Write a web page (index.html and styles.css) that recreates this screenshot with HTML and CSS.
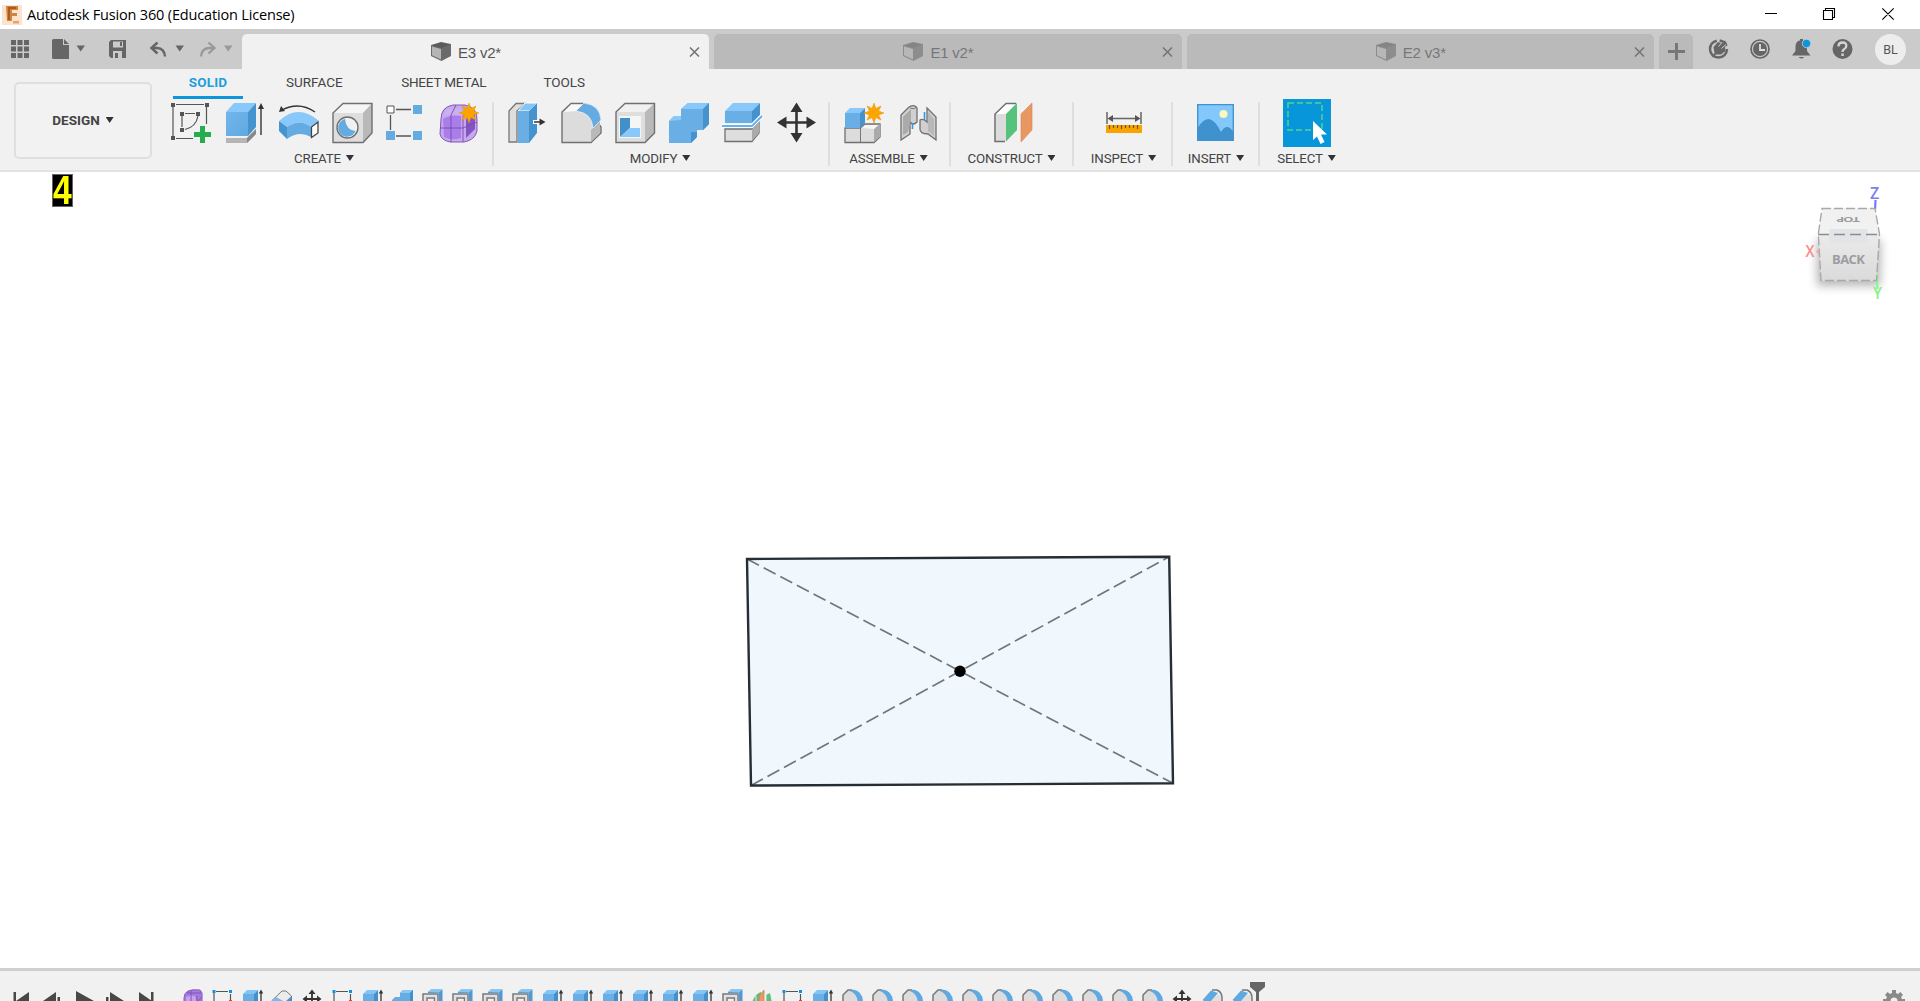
FILE: index.html
```html
<!DOCTYPE html>
<html lang="en">
<head>
<meta charset="utf-8">
<title>Autodesk Fusion 360</title>
<link rel="stylesheet" href="styles.css">
</head>
<body>
<svg class="defs" width="0" height="0">
  <defs>
    <linearGradient id="gBlue" x1="0" y1="0" x2="1" y2="1"><stop offset="0" stop-color="#72b6eb"/><stop offset="1" stop-color="#5fa9e0"/></linearGradient>
    <linearGradient id="gFace" x1="0" y1="0" x2="0" y2="1"><stop offset="0" stop-color="#ebebeb"/><stop offset="1" stop-color="#dadada"/></linearGradient>
    <filter id="soft" x="-30%" y="-30%" width="160%" height="160%"><feGaussianBlur stdDeviation="5"/></filter>
    <path id="star" d="M0-10 1.9-4.6 7-7 4.6-1.9 10 0 4.6 1.9 7 7 1.9 4.6 0 10-1.9 4.6-7 7-4.6 1.9-10 0-4.6-1.9-7-7-1.9-4.6Z" fill="#fca400" stroke="#e79500" stroke-width=".5"/>
    <g id="cube">
      <path d="M0 3 10 0 20 2V14L10.500 19 0 14Z" fill="#6a6a6a"/>
      <path d="M1 4.500 10 7V17.500L1 13.300Z" fill="#b4b6b6"/>
      <path d="M1 3.500 10 .5 19 2.500 10.500 6Z" fill="#5a5a5a"/>
    </g>
    <symbol id="t-form" viewBox="0 0 30 20"><path d="M6 11Q6 6 10 4Q14 2 22 3Q25 5 24 10V20H6Z" fill="#a67bdc" stroke="#8a5bc4"/><path d="M8 10Q14 7 18 10V20H8Z" fill="#c3a2ee"/><path d="M13 3V20M7 15H19L24 10M19 9V20M9 6H23" stroke="#8252bd" fill="none"/></symbol>
    <symbol id="t-sketch" viewBox="0 0 30 20"><path d="M6 5V20M8 4.500H20M22.500 7V14" stroke="#555" fill="none" stroke-width="1.200"/><path d="M4.500 3h3v3h-3zM21 3h3v3h-3z" fill="#148fe6"/><path d="M21 13h3v3h-3z" fill="#f33"/></symbol>
    <symbol id="t-ext" viewBox="0 0 30 20"><path d="M5 7 9 3H20L16 7Z" fill="#83c5f7"/><path d="M5 7H16V20H5Z" fill="#69afe5"/><path d="M16 7 20 3V20H16Z" fill="#4490c9"/><path d="M23 5V20" stroke="#333" stroke-width="1.300"/><path d="M20.800 6.500 23 2.500 25.200 6.500Z" fill="#333"/></symbol>
    <symbol id="t-erase" viewBox="0 0 30 20"><path d="M4 13.500 14 4H18L23.500 9V14L18 20H8L4 16Z" fill="#ececec" stroke="#777"/><path d="M4 13.500 8 10 17 15V20H8L4 16Z" fill="#79baec"/><path d="M17 15 23.500 9V14L18 20H17Z" fill="#4b94ce"/></symbol>
    <symbol id="t-move" viewBox="0 0 30 20"><path d="M14 5V20M8 12H20" stroke="#333" stroke-width="1.800"/><path d="M10.500 7 14 2.500 17.500 7ZM9 8.500V15.500L4.500 12ZM19 8.500V15.500L23.500 12Z" fill="#333"/></symbol>
    <symbol id="t-join" viewBox="0 0 30 20"><path d="M4 13 7 10H12V6L15 3H25V16L21 20H4Z" fill="#66ade4"/><path d="M12 6 15 3H25L22 6Z" fill="#88c8f8"/><path d="M22 6 25 3V16L22 20Z" fill="#4490c9"/></symbol>
    <symbol id="t-shell" viewBox="0 0 30 20"><path d="M10 5 13 2.500H24.500V18L21 20V6H10Z" fill="#4f9ad4"/><path d="M10 5 13 2.500H24.500L21 5.500Z" fill="#85c5f5"/><path d="M5 20V7H20V20" stroke="#777" stroke-width="1.500" fill="none"/><path d="M9 20V11H16.500V20" stroke="#777" stroke-width="1.500" fill="none"/><path d="M7 20V9H18V20" stroke="#ddd" stroke-width="1.500" fill="none"/></symbol>
    <symbol id="t-plane" viewBox="0 0 30 20"><path d="M3 20Q5 8 13 5V20ZM18 8 22 6 24 16V20H18Z" fill="#62bd80"/><path d="M11 9 16 3V20H11Z" fill="#e49a66" stroke="#c77745" stroke-width=".6"/><path d="M8 9V20M18 6V20" stroke="#e6e6e6"/></symbol>
    <symbol id="t-fillet" viewBox="0 0 30 20"><path d="M5 20V8L10 3H14L25 14V20Z" fill="#dcdcdc"/><path d="M5 20V8L10 3H14" stroke="#777" stroke-width="1.500" fill="none"/><path d="M12 4 15 2.500Q24 4 25 14L20 18Q20 7 12 4Z" fill="#5ea9e0"/></symbol>
    <symbol id="t-chamfer" viewBox="0 0 30 20"><path d="M8 20 19 8H23V20Z" fill="#e0e0e0"/><path d="M14 3H19Q24 5 24 11V15L20 19" fill="none" stroke="#777" stroke-width="1.500"/><path d="M4.500 13 13 3.500 20 6 10.500 17Z" fill="#5ea9e0"/></symbol>
  </defs>
</svg>

<header class="titlebar">
  <svg width="20" height="20" viewBox="2 4 20 20"><path d="M2 4H22V24H2Z" fill="#fce3cf"/><path d="M6 5H18V9H12V12H17V15H12V20H7Z" fill="#d2843f"/><path d="M8 6H16V8H10V19H8Z" fill="#a95c1e"/><path d="M13 20H19V22.500H13Z" fill="#eca263"/></svg>
  <h1 class="title">Autodesk Fusion 360 (Education License)</h1>
  <svg class="winctl" width="140" height="29" viewBox="1760 0 140 29" fill="none" stroke="#000" stroke-width="1.100"><path d="M1765 13.500H1777M1823.500 10.500H1832.500V19.500H1823.500ZM1825.500 10.500V8.500H1834.500V17.500H1832.500M1882.300 8.300 1893.700 19.700M1893.700 8.300 1882.300 19.700"/></svg>
</header>

<div class="tabbar">
  <svg class="quick" width="242" height="40" viewBox="0 29 242 40">
    <g fill="#666"><path d="M11 40h5v5h-5zM17.500 40h5v5h-5zM24 40h5v5h-5zM11 46.500h5v5h-5zM17.500 46.500h5v5h-5zM24 46.500h5v5h-5zM11 53h5v5h-5zM17.500 53h5v5h-5zM24 53h5v5h-5z"/>
    <path d="M53.500 39H63V45H69V59H53.500Q52 59 52 57.500V40.500Q52 39 53.500 39ZM64 39 69 44H64Z"/><path d="M76.500 45.500H85L80.700 51.500Z"/>
    <path fill-rule="evenodd" d="M111 40H126V58H111L109 56V42ZM113 41.500V47.500H123V41.500ZM113 51V58H122V51Z"/><path d="M120 42h2v4h-2zM115 53h3v5h-3z"/><path d="M175.500 45.500H184L179.700 51.500Z"/></g>
    <path d="M157.500 42.500 151.500 48 157.500 53.500M152 48H157Q164.500 48.500 165 56.500" fill="none" stroke="#666" stroke-width="2.500"/>
    <path d="M208.500 42.500 214.500 48 208.500 53.500M214 48H209Q201.500 48.500 201 56.500" fill="none" stroke="#999" stroke-width="2.300"/><path d="M224 45.500H232.500L228.200 51.500Z" fill="#999"/>
  </svg>
  <nav class="doctabs">
    <div class="doctab active"><svg width="20" height="19" viewBox="0 0 20 19"><use href="#cube"/></svg><span>E3 v2*</span><svg class="x" width="11" height="10" viewBox="0 0 11 10"><path d="M1 .5 10 9.500M10 .5 1 9.500"/></svg></div>
    <div class="doctab"><svg width="20" height="19" viewBox="0 0 20 19"><use href="#cube"/></svg><span>E1 v2*</span><svg class="x" width="11" height="10" viewBox="0 0 11 10"><path d="M1 .5 10 9.500M10 .5 1 9.500"/></svg></div>
    <div class="doctab"><svg width="20" height="19" viewBox="0 0 20 19"><use href="#cube"/></svg><span>E2 v3*</span><svg class="x" width="11" height="10" viewBox="0 0 11 10"><path d="M1 .5 10 9.500M10 .5 1 9.500"/></svg></div>
    <div class="newtab"><svg width="17" height="17" viewBox="0 0 17 17"><path d="M8.500 0V17M0 8.500H17" stroke="#777" stroke-width="3"/></svg></div>
  </nav>
  <svg class="status" width="160" height="40" viewBox="1700 29 160 40">
    <circle cx="1718.500" cy="49" r="8.500" fill="none" stroke="#666" stroke-width="2.500" stroke-dasharray="38 3 9 3.400"/><path d="M1713.500 47 1718 42 1721 43 1725 40.500 1727 43.500 1725 47 1725.500 51 1721 54.500H1716L1711.500 58 1714.500 53Z" fill="#666"/><path d="M1718.500 46.500 1722 42.500M1721.500 48.500 1726 44.500" stroke="#cbcbcb" stroke-width="1"/>
    <circle cx="1760" cy="49" r="9" fill="none" stroke="#666" stroke-width="1.700"/><circle cx="1760" cy="49" r="7" fill="#666"/><path d="M1760 44V50H1765" fill="none" stroke="#ddd" stroke-width="1.800"/>
    <path d="M1792 55.500 1795.500 51V47Q1795.500 41 1800 40.500V39H1803V40.500Q1807 42 1807 47V51L1810.500 55.500ZM1798.500 57H1804Q1802 60 1798.500 57Z" fill="#666"/><circle cx="1806.500" cy="43.500" r="4.200" fill="#0a96dc" stroke="#cbcbcb" stroke-width=".8"/>
    <circle cx="1842.500" cy="49" r="10" fill="#666"/><path d="M1838.500 46.500Q1838.500 42.500 1842.500 42.500T1846.300 46Q1846.300 48 1844.300 49Q1842.500 50 1842.500 52" fill="none" stroke="#d5d5d5" stroke-width="2.300"/><path d="M1841.300 53.500h2.500v2.500h-2.500z" fill="#d5d5d5"/>
  </svg>
  <div class="avatar">BL</div>
</div>

<div class="ribbon">
  <button class="design">DESIGN<i class="caret"></i></button>
  <div class="ribmain">
    <nav class="modes"><span class="mode on">SOLID</span><span class="mode">SURFACE</span><span class="mode sheet">SHEET METAL</span><span class="mode">TOOLS</span></nav>
    <div class="groups">
      <section class="group g-create">
        <div class="icons">
          <svg viewBox="162 99 54 48"><g stroke="#555" fill="none" stroke-width="1.200"><path d="M173 107V136M176 104.500H204M206.500 107V124M176 138.500H193M182 116V127M185 113.500H195M198 116Q196 127 185 129.500"/></g><path d="M171 103h4v4h-4zM205 103h4v4h-4zM171 136h4v4h-4zM180 112h4v4h-4zM196 112h4v4h-4zM180 128h4v4h-4z" fill="#555"/><path d="M200 126H205V132H211V137H205V143H200V137H194V132H200Z" fill="#24ac4d"/></svg>
          <svg viewBox="216 99 54 48"><path d="M226 138H247L256 129V134L247 143H226Z" fill="#b5b5b5"/><path d="M247 138 256 129V134L247 143Z" fill="#888"/><path d="M226 112 234 103H256L248 112Z" fill="#88c8fb"/><path d="M226 112H248V136H226Z" fill="url(#gBlue)"/><path d="M248 112 256 103V127L248 136Z" fill="#4593cf"/><path d="M261 108V135" stroke="#333" stroke-width="1.400"/><path d="M258 109 261 103 264 109Z" fill="#333"/></svg>
          <svg viewBox="270 99 54 48"><path d="M279 121Q298 103 319 121L311 127Q298 118 287 127Z" fill="#88c8fb"/><path d="M279 121 287 127V139L279 131Z" fill="#4593cf"/><path d="M287 127Q299 118 311 127V137Q299 130 287 139Z" fill="#64abe2"/><path d="M311.500 127 318 122V133L311.500 137.500Z" fill="#fff" stroke="#444" stroke-width="1.300"/><path d="M282 110Q299 101 315 112" fill="none" stroke="#333" stroke-width="1.400"/><path d="M279 112 281 106 285 111Z" fill="#333"/></svg>
          <svg viewBox="324 99 54 48"><path d="M333 113 343 103.500H372V133L363 142.500H333Z" fill="#dedede"/><path d="M333 113 343 103.500H372L363 113Z" fill="#f5f5f5"/><path d="M363 113 372 103.500V133L363 142.500Z" fill="#b9b9b9"/><path d="M333 113 343 103.500H372V133L363 142.500H333Z" fill="none" stroke="#707070" stroke-width="1.400"/><circle cx="347.500" cy="127.500" r="10.500" fill="#f1f1f1" stroke="#707070" stroke-width="1.400"/><path d="M345 119A9 9 0 1 0 355.500 131Q346 130 345 119Z" fill="#64abe2"/></svg>
          <svg viewBox="378 99 54 48"><path d="M396 109.500H411M390.500 115V130M396 136H411" stroke="#555" stroke-width="1.300"/><path d="M387 106h7v7h-7z" fill="#fff" stroke="#555"/><path d="M413 105h9v9h-9zM386 131h9v9h-9zM413 131h9v9h-9z" fill="#64abe2"/></svg>
          <svg viewBox="432 99 54 48"><path d="M441 119Q441 107 453 105H465Q478 108 477 121V131Q475 140 464 142H450Q441 140 440 134Z" fill="#c5a8ee" stroke="#8556bf"/><path d="M443 119Q450 114 461 116V138Q452 141 444 137Z" fill="#aa7de8"/><path d="M447 109H461L465 115H444Z" fill="#cbb0f0"/><path d="M466 119 475 113V129L466 138Z" fill="#8454c4"/><path d="M440 128H463L477 122M451 142V115L456 105M463 142V117L469 107" stroke="#7949b1" fill="none" stroke-width=".9"/><use href="#star" x="469" y="113"/></svg>
        </div>
        <div class="label">CREATE<i class="caret"></i></div>
      </section>
      <section class="group g-modify">
        <div class="icons">
          <svg viewBox="498 99 54 48"><path d="M509 111 516 103.500H525L517 111V142H509Z" fill="#dedede" stroke="#777" stroke-width="1.300"/><path d="M518 111 525 103H537L529 111Z" fill="#83c5f7" stroke="#fff" stroke-width="1"/><path d="M518 111H529V143H518Z" fill="#69afe5"/><path d="M529 111 537 103V133L529 143Z" fill="#4592cc"/><path d="M533 122H540" stroke="#fff" stroke-width="4"/><path d="M534 122H541" stroke="#333" stroke-width="1.500"/><path d="M539.500 118.500 545.500 122 539.500 125.500Z" fill="#333"/></svg>
          <svg viewBox="552 99 54 48"><path d="M562 112 571 103.500H583L601 127V133L591 142.500H562Z" fill="#dcdcdc" stroke="#707070" stroke-width="1.400"/><path d="M564 112 571 104.500H583L577 111Z" fill="#f8f8f8"/><path d="M591 130 600 121V133L591 142Z" fill="#b9b9b9"/><path d="M576 111 584 103Q600 105 601 120L593 128Q592 113 576 111Z" fill="#64abe2" stroke="#f1f1f1" stroke-width=".7"/></svg>
          <svg viewBox="606 99 54 48"><path d="M616 112 625 103.500H654.500V133L645 142.500H616Z" fill="#dedede"/><path d="M616 112 625 103.500H654L645 112Z" fill="#f1f1f1"/><path d="M645 112 654.500 103.500V133L645 142.500Z" fill="#b9b9b9"/><path d="M616 112 625 103.500H654.500V133L645 142.500H616Z" fill="none" stroke="#707070" stroke-width="1.400"/><path d="M619 116H641V138H619Z" fill="#f5f5f5"/><path d="M620 118H630V128L620 137Z" fill="#438fc9"/><path d="M620 137 630 128H640V137Z" fill="#88c8fb"/></svg>
          <svg viewBox="660 99 54 48"><path d="M669 121 674 116H681V109L688 103H709V124L703 130H697V137L691 143H669Z" fill="#69afe5"/><path d="M669 121 674 116H681V120ZM681 109 688 103H709L703 109Z" fill="#88c8fb"/><path d="M703 109 709 103V124L703 130ZM691 132H697V137L691 143Z" fill="#4592cc"/></svg>
          <svg viewBox="714 99 54 48"><path d="M725 129H752L759 122V133L752 141.500H725Z" fill="#dedede" stroke="#707070" stroke-width="1.300"/><path d="M752 129 759 122V133L752 141Z" fill="#aaa"/><path d="M725 111 733 103H760L752 111Z" fill="#88c8fb"/><path d="M725 111H752V123H725Z" fill="#69afe5"/><path d="M752 111 760 103V115L752 123Z" fill="#4592cc"/><path d="M722 126H752L762 116" fill="none" stroke="#fff" stroke-width="4"/><path d="M722 126H752L762 116" fill="none" stroke="#64b2f0" stroke-width="1.900"/></svg>
          <svg viewBox="768 99 54 48"><path d="M796.500 108V137M783 122.500H810" stroke="#333" stroke-width="2.600"/><path d="M790.500 112 796.500 102.500 802.500 112ZM790.500 133 796.500 142.500 802.500 133ZM786.500 116.500V128.500L777 122.500ZM806.500 116.500V128.500L816 122.500Z" fill="#333"/></svg>
        </div>
        <div class="label">MODIFY<i class="caret"></i></div>
      </section>
      <section class="group g-assemble">
        <div class="icons">
          <svg viewBox="834 99 54 48"><path d="M844 128H859L864 124H879V137L873 142.500H844Z" fill="#dcdcdc" stroke="#707070" stroke-width="1.300"/><path d="M873 129 879 124V137L873 142Z" fill="#aaa"/><path d="M859.500 128V142" stroke="#777"/><path d="M861 128 864 125H877L873 129Z" fill="#f5f5f5"/><path d="M844 113 849 108H864L859 113Z" fill="#88c8fb"/><path d="M844 113H859V128H844Z" fill="#69afe5"/><path d="M859 113 864 108V123L859 128Z" fill="#4592cc"/><use href="#star" x="873" y="113"/></svg>
          <svg viewBox="888 99 54 48"><path d="M900 115 908 107Q914 104 916 108V122Q912 126 909 122V134L900 140Z" fill="#d0d0d0" stroke="#707070" stroke-width="1.300"/><path d="M902 117 910 109V119L907 132 902 135Z" fill="#aaa"/><path d="M909 108Q913 110 916 107" fill="none" stroke="#777"/><path d="M911.500 123V129M923.500 112V122" stroke="#3398e4" stroke-width="1.600"/><path d="M926 108 935 117V140L927 134Q919 134 919 129V120Q922 118 926 122Z" fill="#d0d0d0" stroke="#707070" stroke-width="1.300"/><path d="M927 112 933 119V136L927 131Z" fill="#b8b8b8"/></svg>
        </div>
        <div class="label">ASSEMBLE<i class="caret"></i></div>
      </section>
      <section class="group g-construct">
        <div class="icons">
          <svg viewBox="984 99 54 48"><path d="M994 114 1005 103.500H1015L1005 114V141.500H994Z" fill="#fff"/><path d="M994 114H1005V141H994Z" fill="#dcdcdc"/><path d="M1015 103.500H1005L994 114V141.500H1004" fill="none" stroke="#707070" stroke-width="1.500"/><path d="M1005 114 1016 103V130L1005 141.500Z" fill="#57c27c"/><path d="M1020 114 1031 103V130L1020 142Z" fill="#e89762" stroke="#d78755" stroke-width=".6"/></svg>
        </div>
        <div class="label">CONSTRUCT<i class="caret"></i></div>
      </section>
      <section class="group g-inspect">
        <div class="icons">
          <svg viewBox="1097 99 54 48"><path d="M1107 112V124M1141 112V124M1110 118.500H1138" stroke="#666" stroke-width="1.500"/><path d="M1113 115V122L1107.500 118.500ZM1135 115V122L1140.500 118.500Z" fill="#555"/><path d="M1106 125H1142V133H1106Z" fill="#f9a300"/><path d="M1109.500 125v4M1113.500 125v3M1117.500 125v3M1121.500 125v4M1125.500 125v3M1129.500 125v3M1133.500 125v3M1137.500 125v4" stroke="#775019" stroke-width="1.200"/></svg>
        </div>
        <div class="label">INSPECT<i class="caret"></i></div>
      </section>
      <section class="group g-insert">
        <div class="icons">
          <svg viewBox="1189 99 54 48"><path d="M1197 104H1234V141H1197Z" fill="#83c8fb"/><path d="M1197.500 128Q1203 119 1209 119Q1215 120 1221 132Q1224 127 1227 127Q1230 127 1233.500 132V140.500H1197.500Z" fill="#3f92cd"/><path d="M1197.700 104.700H1233.300V140.300H1197.700Z" fill="none" stroke="#3f92cd" stroke-width="1.300"/><circle cx="1223.500" cy="114" r="4" fill="#fdf9bc"/></svg>
        </div>
        <div class="label">INSERT<i class="caret"></i></div>
      </section>
      <section class="group g-select">
        <div class="icons">
          <svg viewBox="1279 99 54 48"><path d="M1282 99H1330V147H1282Z" fill="#0796da"/><path d="M1287 103H1321V130H1287Z" fill="none" stroke="#54d48c" stroke-width="1.500" stroke-dasharray="6 3"/><path d="M1312 121 1326 134.500H1320L1323.500 142 1319.500 144 1316 136.500 1312 140Z" fill="#fff"/></svg>
        </div>
        <div class="label">SELECT<i class="caret"></i></div>
      </section>
    </div>
  </div>
</div>

<main class="canvas">
  <svg class="scene" width="1920" height="796" viewBox="0 172 1920 796">
    <path d="M747 559 1169.200 556.700 1173 783.300 751 785.500Z" fill="#f0f8fe"/>
    <path d="M747 559 1173 783.300M751 785.500 1169.200 556.700" stroke="#6f777c" stroke-width="1.700" stroke-dasharray="13.500 5.300" fill="none"/>
    <path d="M747 559 1169.200 556.700 1173 783.300 751 785.500Z" fill="none" stroke="#262e33" stroke-width="2.400"/>
    <circle cx="960" cy="671.300" r="5.700"/>
    <path d="M1817 240H1881L1880 286H1817Z" fill="#888" opacity=".6" filter="url(#soft)"/>
    <path d="M1875.500 200 1875 210" stroke="#7878ff" stroke-width="2.200"/>
    <path d="M1876.500 273 1877.500 289" stroke="#8df58d" stroke-width="2.200"/>
    <path d="M1822 208.300H1875L1879.700 234H1818.300Z" fill="#f1f1f1"/>
    <path d="M1818.300 234H1879.700L1876 281H1820.700Z" fill="url(#gFace)"/>
    <path d="M1829.500 229H1867.500V243H1829.500Z" fill="#e2e4e8"/>
    <path d="M1822 208.500H1875L1879.500 234 1876.500 280.500H1821L1818.300 234Z" fill="none" stroke="#a9a9a9" stroke-width="1.400" stroke-dasharray="9 3"/>
    <path d="M1818 234.500H1880" stroke="#8c8c8c" stroke-width="1.500" stroke-dasharray="11 5"/>
    <circle cx="1818" cy="251.500" r="1.500" fill="#ffa0a0"/>
    <text class="face" x="1848.500" y="264" text-anchor="middle" textLength="33">BACK</text>
    <text class="face top" transform="translate(1848 217) rotate(180) scale(1 .55)" text-anchor="middle" textLength="24">TOP</text>
    <text class="axis" x="1870" y="198.500" fill="#7c7cf4">Z</text>
    <text class="axis" x="1805.500" y="256.500" textLength="9" lengthAdjust="spacingAndGlyphs" fill="#fb8989">X</text>
    <text class="axis" x="1873" y="299" textLength="9" lengthAdjust="spacingAndGlyphs" fill="#8bf08b">Y</text>
  </svg>
  <div class="counter"><span>4</span></div>
</main>

<footer class="timeline">
  <svg class="play" width="178" height="30" viewBox="0 971 178 30" fill="#484848"><path d="M13.500 992h2.500v9h-2.500zM29 992V1001H16ZM56 992V1001H43ZM57.500 997h2.500v4h-2.500zM76 991 94 1001H76ZM106 997h2.500v4h-2.500zM110 992 124 1001H110ZM139 992 152 1001H139ZM151 992h2.500v9h-2.500z"/></svg>
  <div class="features">
    <svg><use href="#t-form"/></svg><svg><use href="#t-sketch"/></svg><svg><use href="#t-ext"/></svg><svg><use href="#t-erase"/></svg><svg><use href="#t-move"/></svg><svg><use href="#t-sketch"/></svg><svg><use href="#t-ext"/></svg><svg><use href="#t-join"/></svg><svg><use href="#t-shell"/></svg><svg><use href="#t-shell"/></svg><svg><use href="#t-shell"/></svg><svg><use href="#t-shell"/></svg><svg><use href="#t-ext"/></svg><svg><use href="#t-ext"/></svg><svg><use href="#t-ext"/></svg><svg><use href="#t-ext"/></svg><svg><use href="#t-ext"/></svg><svg><use href="#t-ext"/></svg><svg><use href="#t-shell"/></svg><svg><use href="#t-plane"/></svg><svg><use href="#t-sketch"/></svg><svg><use href="#t-ext"/></svg><svg><use href="#t-fillet"/></svg><svg><use href="#t-fillet"/></svg><svg><use href="#t-fillet"/></svg><svg><use href="#t-fillet"/></svg><svg><use href="#t-fillet"/></svg><svg><use href="#t-fillet"/></svg><svg><use href="#t-fillet"/></svg><svg><use href="#t-fillet"/></svg><svg><use href="#t-fillet"/></svg><svg><use href="#t-fillet"/></svg><svg><use href="#t-fillet"/></svg><svg><use href="#t-move"/></svg><svg><use href="#t-chamfer"/></svg><svg><use href="#t-chamfer"/></svg>
  </div>
  <svg class="marker" width="16" height="30" viewBox="1250 971 16 30"><path d="M1250 982H1265V987L1259 992V1001H1256V992L1250 987Z" fill="#666"/></svg>
  <svg class="gear" width="22" height="12" viewBox="0 0 22 12"><path d="M9 1H13V4L15 5 17.500 3 20 6 18 8 19 10H22V12H0V10H3L4 8 2 6 4.500 3 7 5 9 4Z" fill="#8a8a8a"/><circle cx="11" cy="12" r="3.500" fill="#f1f1f1"/></svg>
</footer>
</body>
</html>
```
FILE: styles.css
```css
* { box-sizing: border-box; }
body {
  margin: 0;
  width: 1920px;
  height: 1001px;
  overflow: hidden;
  display: flex;
  flex-direction: column;
  background: #fff;
  color: #444;
  font-family: Roboto, "Liberation Sans", sans-serif;
}
svg { display: block; flex: none; }
.defs { position: absolute; }

.titlebar { height: 29px; flex: none; display: flex; align-items: center; padding: 0 20px 0 2px; }
.title { margin: 0 0 0 5px; font: 400 14.5px "Open Sans", sans-serif; color: #000; letter-spacing: -0.17px; white-space: nowrap; }
.winctl { margin-left: auto; }

.tabbar { height: 40px; flex: none; display: flex; background: #cbcbcb; }
.doctabs { display: flex; align-items: flex-end; gap: 5px; }
.doctab {
  width: 467.4px;
  height: 35px;
  display: flex;
  align-items: center;
  padding: 0 9px 0 189px;
  border-radius: 5px 5px 0 0;
  background: #bababa;
  color: #777;
  font: 15px "Liberation Sans", sans-serif;
  letter-spacing: -0.2px;
}
.doctab > svg:first-child { opacity: .55; }
.doctab span { margin-left: 7px; padding-top: 1px; }
.doctab .x { margin-left: auto; fill: none; stroke: #777; stroke-width: 1.6; }
.doctab.active { background: #f1f1f1; color: #555; }
.doctab.active > svg:first-child { opacity: 1; }
.newtab { width: 34px; height: 35px; display: flex; align-items: center; justify-content: center; background: #bababa; border-radius: 5px 5px 0 0; }
.status { margin-left: 6.8px; }
.avatar {
  width: 31px; height: 31px; margin: 4.5px 0 0 15px;
  border-radius: 50%; background: #ededed; color: #555;
  display: flex; align-items: center; justify-content: center;
  font-size: 12.5px;
}

.ribbon { height: 103px; flex: none; display: flex; background: #f1f1f1; border-bottom: 2px solid #e2e2e2; }
.design {
  width: 138px; height: 77px; margin: 13px 4px 0 14px; padding: 0 0 1px;
  display: flex; align-items: center; justify-content: center;
  border: 2px solid #dfdfdf; border-radius: 5px; background: #f2f2f2;
  font: 700 13.5px Roboto, sans-serif; color: #444;
}
.caret { width: 8px; height: 6px; margin-left: 6px; background: #333; clip-path: polygon(0 0, 100% 0, 50% 100%); }
.ribmain { display: flex; flex-direction: column; }
.modes { height: 30px; display: flex; padding-left: 17px; }
.mode { font-size: 13.5px; line-height: 16px; padding-top: 5px; margin-right: 57px; }
.mode:nth-child(2) { margin-left: -14px; }
.mode.sheet { margin-left: 1.5px; letter-spacing: -0.2px; }
.mode.on { width: 70px; text-align: center; font-weight: 700; color: #1e9fdc; border-bottom: 3.5px solid #0d96db; height: 30px; letter-spacing: .2px; }
.groups { display: flex; }
.group { height: 70px; display: flex; flex-direction: column; align-items: center; position: relative; }
.group:not(:last-child)::after { content: ""; position: absolute; right: 0; top: 3px; width: 2px; height: 64px; background: #dedede; }
.g-create { width: 338px; padding-right: 2px; }
.g-modify { width: 336px; padding-right: 4px; }
.g-assemble { width: 121px; padding-right: 4px; }
.g-construct { width: 123px; padding-right: 2px; }
.g-inspect { width: 99px; }
.g-insert { width: 87px; padding-right: 1px; }
.g-select { width: 93px; }
.icons { display: flex; height: 48px; }
.icons svg { width: 54px; height: 48px; }
.label { display: flex; align-items: center; margin-top: 4px; font-size: 13.3px; line-height: 16px; letter-spacing: -0.15px; }
.label .caret { margin: 0 0 2px 5px; }

.canvas { height: 796px; flex: none; position: relative; }
.face { font: 700 13px "Open Sans", sans-serif; fill: #9b9da1; }
.axis { font: 600 16px "Open Sans", sans-serif; }
.counter {
  position: absolute; left: 52px; top: 2px; width: 21px; height: 33px;
  background: #000; border: 1px solid #666; color: #ff0;
  display: flex; align-items: center; justify-content: center;
  font: 700 41px/31px "Liberation Sans", sans-serif;
}
.counter span { transform: scaleX(.82); }

.timeline { height: 33px; flex: none; display: flex; background: #f1f1f1; border-top: 3px solid #cfcfcf; }
.features { display: flex; padding-top: 16px; height: 30px; overflow: hidden; }
.features svg { width: 30px; height: 20px; }
.marker { margin-left: -8px; }
.gear { margin: 18px 15px 0 auto; }
```
